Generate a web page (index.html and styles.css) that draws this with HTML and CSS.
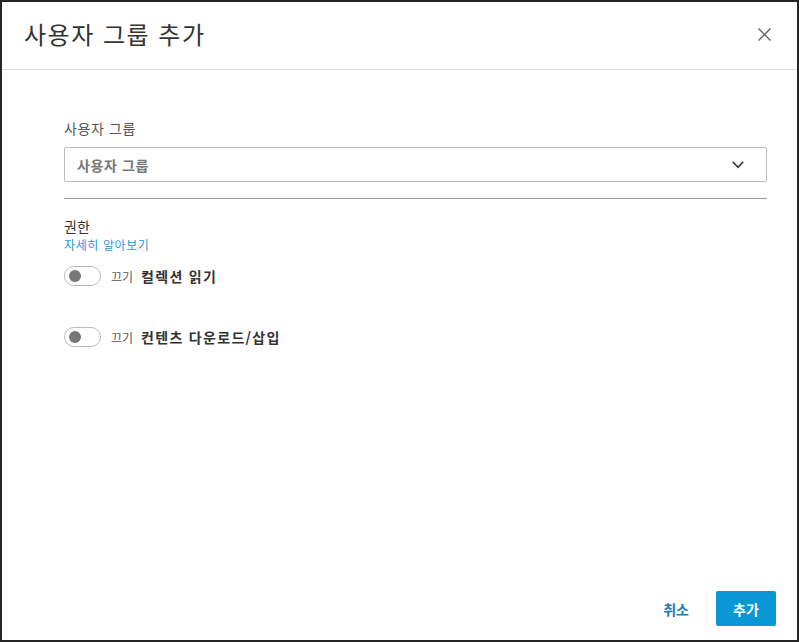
FILE: index.html
```html
<!DOCTYPE html>
<html lang="ko">
<head>
<meta charset="utf-8">
<title>사용자 그룹 추가</title>
<link rel="stylesheet" href="styles.css">
</head>
<body>
<header class="dialog-header">
  <h1 class="dialog-title">사용자 그룹 추가</h1>
  <button class="close-btn" aria-label="닫기">
    <svg width="13" height="13" viewBox="0 0 13 13"><path d="M0.5 0.5 L12.5 12.5 M12.5 0.5 L0.5 12.5" stroke="#666" stroke-width="1.5" fill="none"/></svg>
  </button>
</header>
<main class="dialog-body">
  <label class="field-label">사용자 그룹</label>
  <div class="select">
    <span class="select-placeholder">사용자 그룹</span>
    <svg class="chevron" width="12" height="8" viewBox="0 0 12 8"><path d="M0.8 0.8 L6 6.4 L11.2 0.8" stroke="#333" stroke-width="1.6" fill="none"/></svg>
  </div>
  <hr class="divider">
  <div class="section-title">권한</div>
  <a class="learn-more" href="#">자세히 알아보기</a>
  <div class="perm-row first">
    <span class="toggle"><span class="knob"></span></span>
    <span class="toggle-state">끄기</span>
    <span class="perm-name">컬렉션 읽기</span>
  </div>
  <div class="perm-row">
    <span class="toggle"><span class="knob"></span></span>
    <span class="toggle-state">끄기</span>
    <span class="perm-name">컨텐츠 다운로드/삽입</span>
  </div>
</main>
<footer class="dialog-footer">
  <button class="btn-cancel">취소</button>
  <button class="btn-primary">추가</button>
</footer>
</body>
</html>
```

FILE: styles.css
```css
html, body {
  margin: 0;
  padding: 0;
}
body {
  width: 799px;
  height: 642px;
  box-sizing: border-box;
  border: 2px solid #262626;
  background: #fff;
  display: flex;
  flex-direction: column;
  font-family: "Noto Sans CJK KR", "Noto Sans", sans-serif;
  color: #333;
  overflow: hidden;
}
.dialog-header {
  height: 68px;
  box-sizing: border-box;
  border-bottom: 1px solid #dcdcdc;
  display: flex;
  justify-content: space-between;
  align-items: flex-start;
  padding: 17px 26px 0 22px;
}
.dialog-title {
  margin: 0;
  font-size: 24px;
  font-weight: 400;
  line-height: 30px;
  letter-spacing: 1.5px;
  color: #333;
}
.close-btn {
  border: 0;
  background: none;
  padding: 0;
  margin-top: 9px;
  width: 13px;
  height: 13px;
  display: flex;
}
.dialog-body {
  display: flex;
  flex-direction: column;
  align-items: flex-start;
  padding: 48px 30px 0 62px;
}
.field-label {
  font-size: 14px;
  line-height: 20px;
  letter-spacing: 0.6px;
  color: #555;
}
.select {
  margin-top: 9px;
  align-self: stretch;
  height: 35px;
  box-sizing: border-box;
  border: 1px solid #bbb;
  border-radius: 2px;
  display: flex;
  align-items: center;
  justify-content: space-between;
  padding: 0 22px 0 12px;
}
.select-placeholder {
  font-size: 14px;
  font-weight: 700;
  letter-spacing: 0.6px;
  color: #777;
}
.divider {
  align-self: stretch;
  margin: 16px 0 0 0;
  border: 0;
  border-top: 1px solid #999;
  height: 0;
}
.section-title {
  margin-top: 17px;
  font-size: 14px;
  line-height: 20px;
  color: #333;
}
.learn-more {
  font-size: 12px;
  line-height: 17px;
  letter-spacing: 0.6px;
  color: #1b9ad8;
  text-decoration: none;
}
.perm-row {
  display: flex;
  align-items: center;
  margin-top: 41px;
  height: 20px;
}
.perm-row.first {
  margin-top: 13px;
}
.toggle {
  width: 37px;
  height: 20px;
  box-sizing: border-box;
  border: 1px solid #bbb;
  border-radius: 10px;
  display: flex;
  align-items: center;
  padding-left: 4px;
}
.knob {
  width: 12px;
  height: 12px;
  border-radius: 50%;
  background: #777;
}
.toggle-state {
  margin-left: 10px;
  font-size: 12px;
  color: #555;
}
.perm-name {
  margin-left: 8px;
  font-size: 14px;
  font-weight: 700;
  letter-spacing: 1.3px;
  color: #333;
}
.dialog-footer {
  margin-top: auto;
  display: flex;
  justify-content: flex-end;
  align-items: center;
  gap: 15px;
  padding: 0 21px 14px 0;
}
.btn-cancel {
  border: 0;
  background: none;
  padding: 0 12px;
  height: 35px;
  font-family: inherit;
  font-size: 14px;
  font-weight: 700;
  color: #1f7ab8;
}
.btn-primary {
  border: 0;
  width: 60px;
  height: 35px;
  border-radius: 2px;
  background: #0b96d6;
  color: #fff;
  font-family: inherit;
  font-size: 14px;
  font-weight: 700;
}
```
